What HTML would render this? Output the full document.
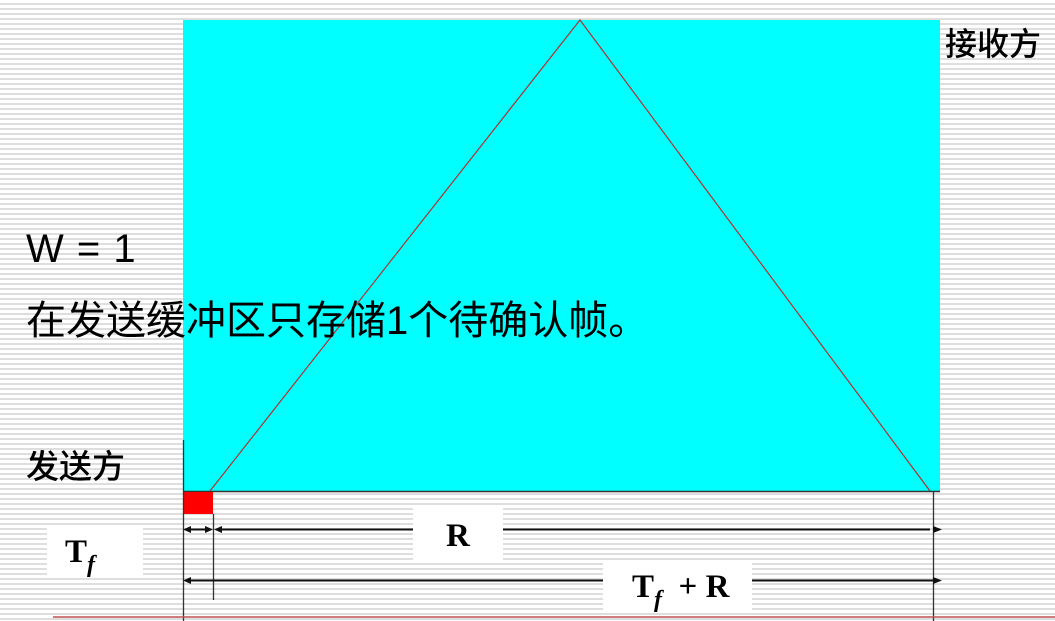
<!DOCTYPE html>
<html><head><meta charset="utf-8"><style>
html,body{margin:0;padding:0}
body{width:1055px;height:621px;position:relative;overflow:hidden;
background:repeating-linear-gradient(to bottom,#fff 0px,#fff 3px,#dedede 3px,#dedede 5px);}
.t{position:absolute;white-space:nowrap;color:#000;line-height:1}
.cjk{font-family:"Liberation Sans","Noto Sans CJK SC",sans-serif}
.box{position:absolute;background:#fff}
.ser{font-family:"Liberation Serif",serif;font-weight:bold}
</style></head><body>
<svg width="1055" height="621" style="position:absolute;left:0;top:0">
<rect x="183" y="20" width="757" height="471" fill="#00ffff"/>
<polyline points="210,491 580,20 930,491" fill="none" stroke="#b03030" stroke-width="1.2"/>
<line x1="183" y1="491.5" x2="940" y2="491.5" stroke="#333" stroke-width="1.5"/>
<rect x="183" y="492" width="30" height="22" fill="#ff0000"/>
<line x1="183.5" y1="440" x2="183.5" y2="621" stroke="#333" stroke-width="1.3"/>
<line x1="213.5" y1="514" x2="213.5" y2="600" stroke="#333" stroke-width="1.3"/>
<line x1="933.5" y1="491" x2="933.5" y2="621" stroke="#333" stroke-width="1.3"/>
<line x1="53" y1="617" x2="1055" y2="617" stroke="#c05050" stroke-width="1.5"/>
<g stroke="#111" stroke-width="2" fill="#111">
<line x1="186" y1="529.5" x2="210" y2="529.5"/>
<polygon points="183,529.5 191,526 191,533" stroke="none"/>
<polygon points="213,529.5 205,526 205,533" stroke="none"/>
<line x1="216" y1="529.5" x2="930" y2="529.5"/>
<polygon points="214,529.5 222,526 222,533" stroke="none"/>
<polygon points="942,529.5 933,526 933,533" stroke="none"/>
<line x1="186" y1="580.5" x2="935" y2="580.5"/>
<polygon points="183,580.5 191,577 191,584" stroke="none"/>
<polygon points="942,580.5 933,577 933,584" stroke="none"/>
</g>
</svg>
<div class="box" style="left:47px;top:525px;width:96px;height:53px"></div>
<div class="box" style="left:413px;top:508px;width:90px;height:54px"></div>
<div class="box" style="left:603px;top:560px;width:149px;height:50px"></div>
<div class="t cjk" style="left:945px;top:28px;font-size:32px;font-weight:500">接收方</div>
<div class="t" style="left:26px;top:229px;font-size:40px;letter-spacing:1px;font-family:'Liberation Sans',sans-serif">W = 1</div>
<div class="t cjk" style="left:26px;top:301px;font-size:40px">在发送缓冲区只存储1个待确认帧。</div>
<div class="t cjk" style="left:26px;top:450px;font-size:33px;font-weight:500">发送方</div>
<div class="t ser" style="left:65px;top:536px;font-size:33px">T<span style="font-style:italic;font-size:24px;position:relative;top:10px">f</span></div>
<div class="t ser" style="left:446px;top:520px;font-size:33px">R</div>
<div class="t ser" style="left:632px;top:571px;font-size:33px">T<span style="font-style:italic;font-size:24px;position:relative;top:10px">f</span>&nbsp;&nbsp;+ R</div>
</body></html>
